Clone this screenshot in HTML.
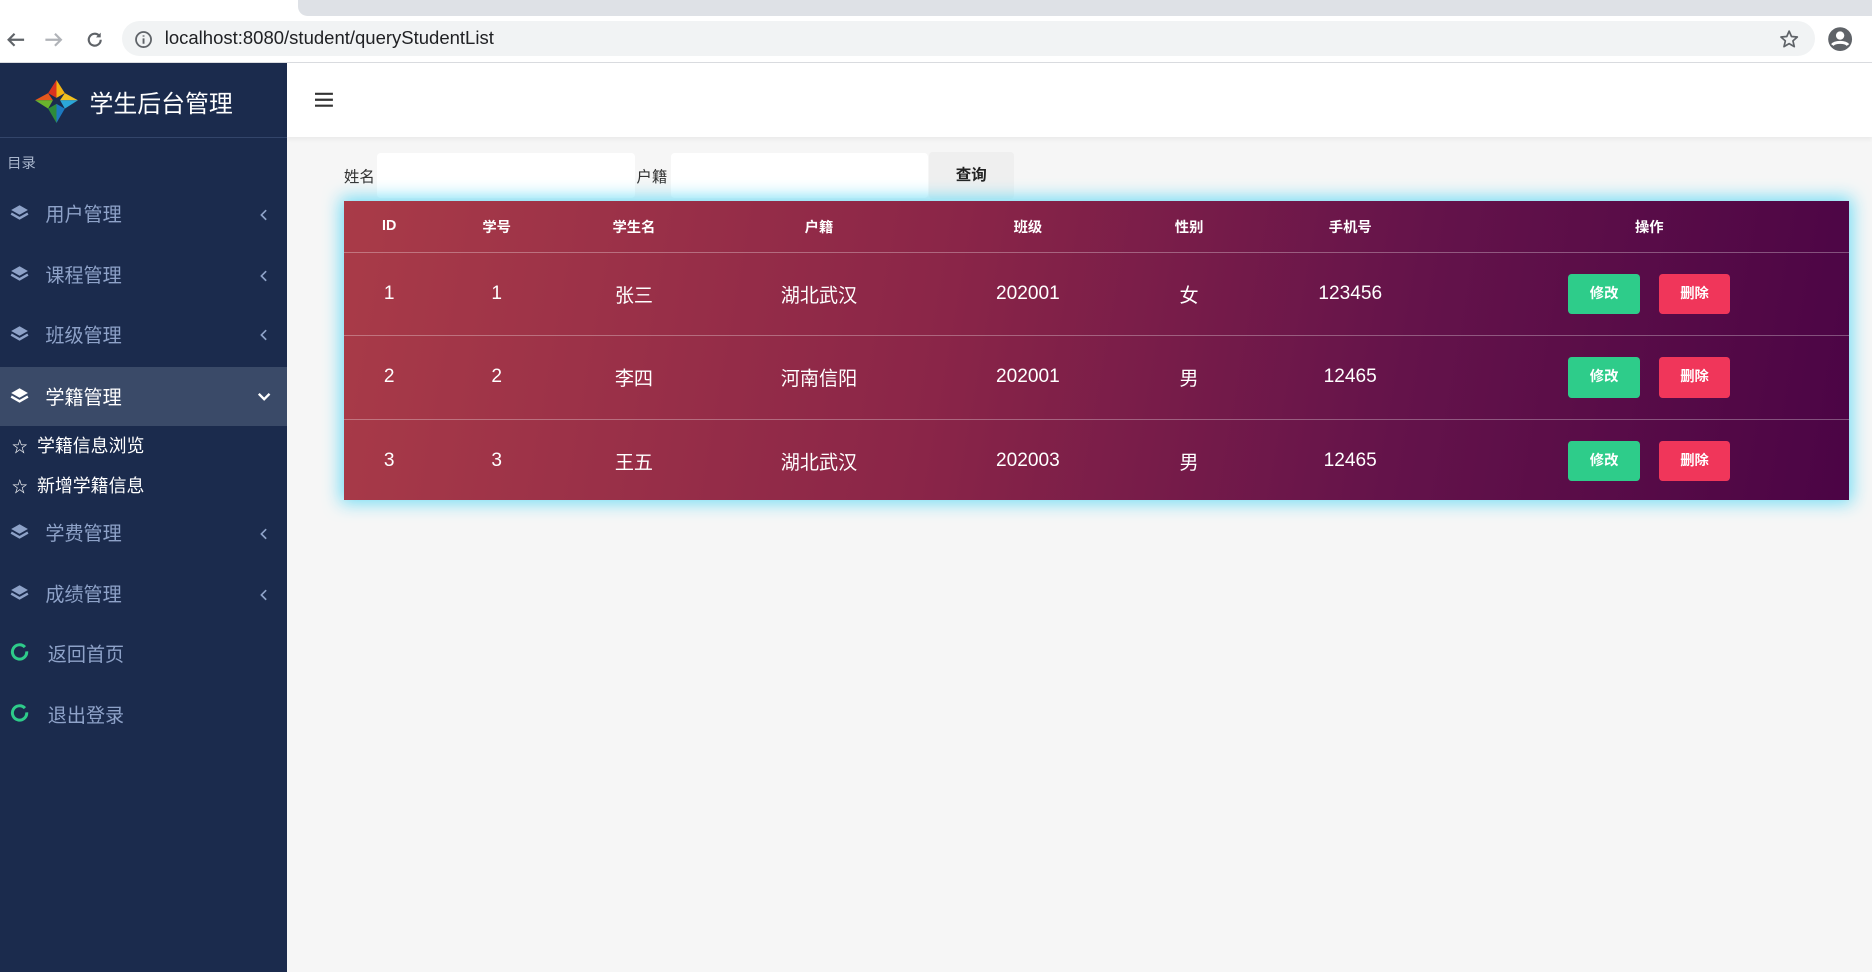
<!DOCTYPE html>
<html><head><meta charset="utf-8"><style>
html,body{margin:0;padding:0;overflow:hidden}
body{width:1568px;height:814px;zoom:1.19388;position:relative;background:#f6f6f6;font-family:"Liberation Sans","Noto Sans CJK SC",sans-serif}
.abs{position:absolute}
.tabs{left:0;top:0;width:1568px;height:14px;background:#fff}
.tabs .g{position:absolute;left:250px;top:0;right:0;height:13px;background:#dee1e6;border-radius:0 0 0 8px}
.bar{left:0;top:14px;width:1568px;height:38px;background:#fff;border-bottom:2px solid #dadce0}
.url{left:102px;top:4px;width:1418px;height:29px;background:#f1f3f4;border-radius:15px}
.url span{position:absolute;left:36px;top:5px;font-size:15.5px;color:#202124}
.side{left:0;top:53px;width:240px;height:761px;background:#1b2b4d}
.logo{height:62px;border-bottom:1px solid #33456a;position:relative}
.logo .t{position:absolute;left:75px;top:17px;color:#fff;font-size:20px}
.item{position:absolute;left:0;width:240px;height:50px;color:#8ea2c8;font-size:16px}
.item .tx{position:absolute;left:38px;top:13px}
.item .ch{position:absolute;left:217px;top:21px}
.item svg.ic{position:absolute;left:8px;top:17px}
.sub{position:absolute;left:10px;color:#fff;font-size:15px}
.sub b{font-weight:normal;font-size:13px;margin-right:8px}
.main-h{left:240px;top:53px;width:1328px;height:62px;background:#fff;box-shadow:0 2px 4px rgba(0,0,0,.06)}
.lbl{font-size:13px;color:#333}
.inp{background:#fff;border-radius:3px;height:38px;top:128px}
table{border-collapse:collapse;width:100%;color:#fff;text-align:center}
th{height:43px;font-size:12px;font-weight:bold;padding:0}
td{height:69px;font-size:16px;border-top:1px solid rgba(255,255,255,.3);padding:0}
.b{display:inline-block;width:60px;height:34px;line-height:34px;border-radius:3px;font-size:12px;font-weight:bold;vertical-align:middle}
</style></head><body>
<div class="abs tabs"><div class="g"></div></div>
<div class="abs bar">
 <svg class="abs" style="left:4px;top:10px" width="18" height="18" viewBox="0 0 18 18"><path d="M16 9H3M8 4L3 9l5 5" stroke="#5f6368" stroke-width="1.8" fill="none"/></svg>
 <svg class="abs" style="left:36px;top:10px" width="18" height="18" viewBox="0 0 18 18"><path d="M2 9h13M10 4l5 5-5 5" stroke="#b0b3b8" stroke-width="1.8" fill="none"/></svg>
 <svg class="abs" style="left:70px;top:10px" width="18" height="18" viewBox="0 0 18 18"><path d="M14 9a5 5 0 1 1-1.5-3.6" stroke="#5f6368" stroke-width="1.8" fill="none"/><path d="M14 3v4h-4z" fill="#5f6368"/></svg>
 <div class="abs url">
  <svg class="abs" style="left:10px;top:7px" width="16" height="16" viewBox="0 0 16 16"><circle cx="8" cy="8" r="6.3" stroke="#5f6368" stroke-width="1.5" fill="none"/><path d="M8 7v4.5M8 4.5v1" stroke="#5f6368" stroke-width="1.6"/></svg>
  <span>localhost:8080/student/queryStudentList</span>
  <svg class="abs" style="left:1388px;top:6px" width="17" height="17" viewBox="0 0 24 24"><path d="M12 2.5l2.8 6.4 6.9.6-5.2 4.6 1.6 6.8L12 17.3l-6.1 3.6 1.6-6.8-5.2-4.6 6.9-.6z" stroke="#5f6368" stroke-width="2" fill="none" stroke-linejoin="round"/></svg>
 </div>
 <svg class="abs" style="left:1530px;top:8px" width="22" height="22" viewBox="0 0 22 22"><circle cx="11" cy="11" r="10" fill="#5f6368"/><circle cx="11" cy="8" r="3.5" fill="#fff"/><path d="M4.5 16c2-3 11-3 13 0" stroke="#fff" stroke-width="2.5" fill="none"/></svg>
</div>

<div class="abs side">
 <div class="logo">
  <svg class="abs" style="left:29px;top:14px" width="36" height="36" viewBox="0 0 36 36"><path d="M18 0L11 11 18 15z" fill="#d9331f"/><path d="M18 0L25 11 18 15z" fill="#f2b413"/><path d="M0 17L11 11 15 17z" fill="#e4571d"/><path d="M36 17L25 11 21 17z" fill="#f0c020"/><path d="M0 17L11 24 15 17z" fill="#6ab42d"/><path d="M36 17L25 24 21 17z" fill="#2aa7d9"/><path d="M18 36L11 24 18 20z" fill="#2e8b3a"/><path d="M18 36L25 24 18 20z" fill="#1c79c0"/></svg>
  <div class="t">学生后台管理</div>
 </div>
 <div class="abs" style="left:6px;top:74px;font-size:12px;color:#a9b6cc">目录</div>
 <div class="item" style="top:101px"><svg class="ic" width="16" height="16" viewBox="0 0 16 16"><path d="M8 1l7 4-7 4-7-4z" fill="#8ea2c8"/><path d="M1 8l7 4 7-4" stroke="#8ea2c8" stroke-width="2" fill="none"/></svg><span class="tx">用户管理</span><svg class="ch" width="8" height="10" viewBox="0 0 8 10"><path d="M6 1L2 5l4 4" stroke="#8ea2c8" stroke-width="1.4" fill="none"/></svg></div>
 <div class="item" style="top:152px"><svg class="ic" width="16" height="16" viewBox="0 0 16 16"><path d="M8 1l7 4-7 4-7-4z" fill="#8ea2c8"/><path d="M1 8l7 4 7-4" stroke="#8ea2c8" stroke-width="2" fill="none"/></svg><span class="tx">课程管理</span><svg class="ch" width="8" height="10" viewBox="0 0 8 10"><path d="M6 1L2 5l4 4" stroke="#8ea2c8" stroke-width="1.4" fill="none"/></svg></div>
 <div class="item" style="top:202px"><svg class="ic" width="16" height="16" viewBox="0 0 16 16"><path d="M8 1l7 4-7 4-7-4z" fill="#8ea2c8"/><path d="M1 8l7 4 7-4" stroke="#8ea2c8" stroke-width="2" fill="none"/></svg><span class="tx">班级管理</span><svg class="ch" width="8" height="10" viewBox="0 0 8 10"><path d="M6 1L2 5l4 4" stroke="#8ea2c8" stroke-width="1.4" fill="none"/></svg></div>
 <div class="item" style="top:254px;background:#3a4a68;color:#fff"><svg class="ic" width="16" height="16" viewBox="0 0 16 16"><path d="M8 1l7 4-7 4-7-4z" fill="#fff"/><path d="M1 8l7 4 7-4" stroke="#fff" stroke-width="2" fill="none"/></svg><span class="tx">学籍管理</span><svg class="ch" style="left:215px;top:21px" width="12" height="8" viewBox="0 0 12 8"><path d="M1.5 1.5L6 6l4.5-4.5" stroke="#fff" stroke-width="2" fill="none"/></svg></div>
 <div class="sub" style="top:309px;left:10px"><b>☆</b>学籍信息浏览</div>
 <div class="sub" style="top:342px;left:10px"><b>☆</b>新增学籍信息</div>
 <div class="item" style="top:368px"><svg class="ic" width="16" height="16" viewBox="0 0 16 16"><path d="M8 1l7 4-7 4-7-4z" fill="#8ea2c8"/><path d="M1 8l7 4 7-4" stroke="#8ea2c8" stroke-width="2" fill="none"/></svg><span class="tx">学费管理</span><svg class="ch" width="8" height="10" viewBox="0 0 8 10"><path d="M6 1L2 5l4 4" stroke="#8ea2c8" stroke-width="1.4" fill="none"/></svg></div>
 <div class="item" style="top:419px"><svg class="ic" width="16" height="16" viewBox="0 0 16 16"><path d="M8 1l7 4-7 4-7-4z" fill="#8ea2c8"/><path d="M1 8l7 4 7-4" stroke="#8ea2c8" stroke-width="2" fill="none"/></svg><span class="tx">成绩管理</span><svg class="ch" width="8" height="10" viewBox="0 0 8 10"><path d="M6 1L2 5l4 4" stroke="#8ea2c8" stroke-width="1.4" fill="none"/></svg></div>
 <div class="item" style="top:469px"><svg class="ic" width="16" height="16" viewBox="0 0 16 16"><path d="M12.5 3.5A6 6 0 1 0 14 7" stroke="#2ecc8a" stroke-width="2.5" fill="none"/></svg><span class="tx" style="left:40px">返回首页</span></div>
 <div class="item" style="top:520px"><svg class="ic" width="16" height="16" viewBox="0 0 16 16"><path d="M12.5 3.5A6 6 0 1 0 14 7" stroke="#2ecc8a" stroke-width="2.5" fill="none"/></svg><span class="tx" style="left:40px">退出登录</span></div>
</div>

<div class="abs main-h"><svg class="abs" style="left:24px;top:24px" width="15" height="13" viewBox="0 0 15 13"><path d="M0 1.5h15M0 6.5h15M0 11.5h15" stroke="#333" stroke-width="1.8"/></svg></div>

<div class="abs lbl" style="left:288px;top:138px">姓名</div>
<div class="abs inp" style="left:316px;width:216px"></div>
<div class="abs lbl" style="left:533px;top:138px">户籍</div>
<div class="abs inp" style="left:562px;width:215px"></div>
<div class="abs" style="left:778px;top:127px;width:71px;height:40px;background:#efefef;border-radius:3px;text-align:center;line-height:40px;font-size:13px;font-weight:bold;color:#222">查询</div>

<div class="abs" style="left:288px;top:168px;width:1261px;height:251px;background:linear-gradient(100deg,#a93b48 0%,#8a2548 40%,#64134a 70%,#4b0445 100%);box-shadow:0 0 14px 3px #6fdcf5">
<table>
<tr><th style="width:76px">ID</th><th style="width:104px">学号</th><th style="width:126px">学生名</th><th style="width:184px">户籍</th><th style="width:166px">班级</th><th style="width:104px">性别</th><th style="width:166px">手机号</th><th>操作</th></tr>
<tr><td>1</td><td>1</td><td>张三</td><td>湖北武汉</td><td>202001</td><td>女</td><td>123456</td><td><span class="b" style="background:#2ecc8a">修改</span>&nbsp;&nbsp;&nbsp;&nbsp;<span class="b" style="background:#f0365a;margin-left:-2px">删除</span></td></tr>
<tr><td>2</td><td>2</td><td>李四</td><td>河南信阳</td><td>202001</td><td>男</td><td>12465</td><td><span class="b" style="background:#2ecc8a">修改</span>&nbsp;&nbsp;&nbsp;&nbsp;<span class="b" style="background:#f0365a;margin-left:-2px">删除</span></td></tr>
<tr><td>3</td><td>3</td><td>王五</td><td>湖北武汉</td><td>202003</td><td>男</td><td>12465</td><td><span class="b" style="background:#2ecc8a">修改</span>&nbsp;&nbsp;&nbsp;&nbsp;<span class="b" style="background:#f0365a;margin-left:-2px">删除</span></td></tr>
</table>
</div>
</body></html>
